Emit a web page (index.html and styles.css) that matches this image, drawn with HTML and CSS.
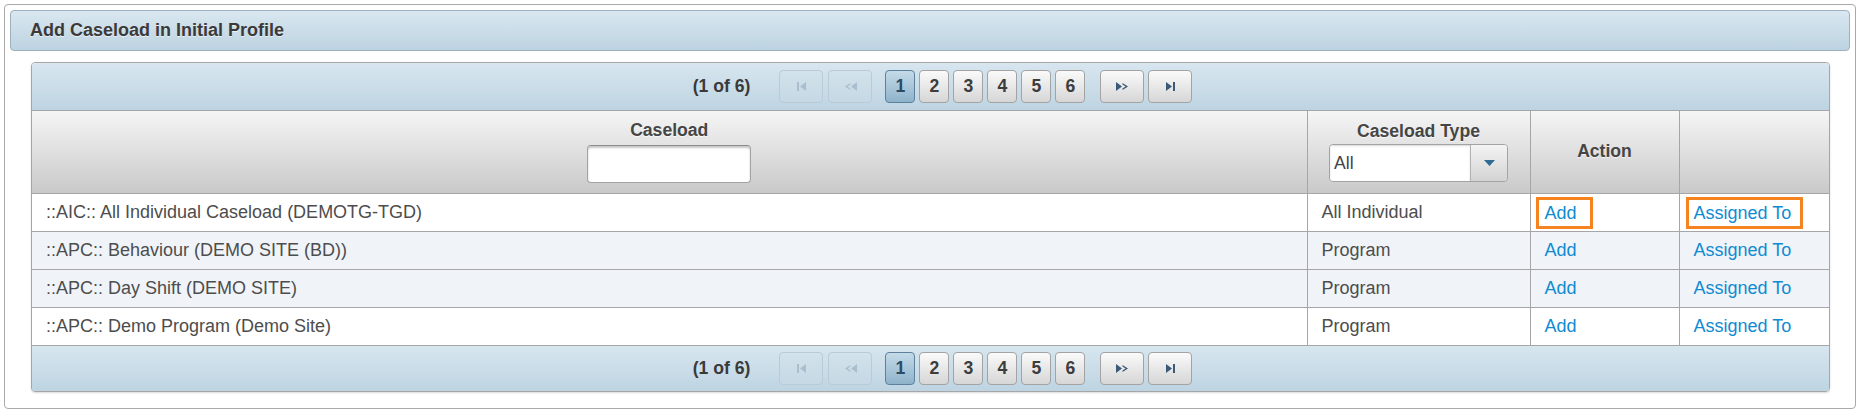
FILE: index.html
```html
<!DOCTYPE html>
<html lang="en">
<head>
    <meta charset="UTF-8">
    <meta name="viewport" content="width=device-width, initial-scale=1.0">
    <title>Add Caseload in Initial Profile</title>
    <link rel="stylesheet" href="styles.css">
</head>
<body>
    <div class="panel">
        <div class="panel-title">Add Caseload in Initial Profile</div>

        <div class="datatable">
            <div class="paginator">
                <span class="current">(1 of 6)</span>
                <span class="pg-btn nav disabled first"><svg width="15" height="9" viewBox="0 0 15 9"><rect x="3" y="0" width="2" height="9"/><path d="M12 0 L6 4.5 L12 9 Z"/></svg></span>
                <span class="pg-btn nav disabled prev"><svg width="15" height="9" viewBox="0 0 15 9"><path d="M7.5 1 L2 4.5 L7.5 8 L7.5 6.6 L4.4 4.5 L7.5 2.4 Z"/><path d="M14 0 L8 4.5 L14 9 Z"/></svg></span>
                <span class="pages">
                    <span class="pg-btn page active">1</span>
                    <span class="pg-btn page">2</span>
                    <span class="pg-btn page">3</span>
                    <span class="pg-btn page">4</span>
                    <span class="pg-btn page">5</span>
                    <span class="pg-btn page">6</span>
                </span>
                <span class="pg-btn nav next"><svg width="15" height="9" viewBox="0 0 15 9"><path d="M1 0 L7 4.5 L1 9 Z"/><path d="M7.5 1 L13 4.5 L7.5 8 L7.5 6.6 L10.6 4.5 L7.5 2.4 Z"/></svg></span>
                <span class="pg-btn nav last"><svg width="15" height="9" viewBox="0 0 15 9"><path d="M3 0 L9 4.5 L3 9 Z"/><rect x="10" y="0" width="2" height="9"/></svg></span>
            </div>

            <table class="grid">
                <colgroup>
                    <col class="c-name">
                    <col class="c-type">
                    <col class="c-action">
                    <col class="c-assign">
                </colgroup>
                <thead>
                    <tr>
                        <th>
                            <span class="th-label">Caseload</span>
                            <input type="text" class="filter-input">
                        </th>
                        <th>
                            <span class="th-label">Caseload Type</span>
                            <div class="filter-select">
                                <span class="select-value">All</span>
                                <span class="select-trigger"><svg width="11" height="6" viewBox="0 0 11 6"><path d="M0 0 H11 L5.5 6 Z"/></svg></span>
                            </div>
                        </th>
                        <th>Action</th>
                        <th></th>
                    </tr>
                </thead>
                <tbody>
                    <tr>
                        <td>::AIC:: All Individual Caseload (DEMOTG-TGD)</td>
                        <td>All Individual</td>
                        <td><a href="#" class="link marked add-mark">Add</a></td>
                        <td><a href="#" class="link marked assign-mark">Assigned To</a></td>
                    </tr>
                    <tr class="alt">
                        <td>::APC:: Behaviour (DEMO SITE (BD))</td>
                        <td>Program</td>
                        <td><a href="#" class="link">Add</a></td>
                        <td><a href="#" class="link">Assigned To</a></td>
                    </tr>
                    <tr class="alt">
                        <td>::APC:: Day Shift (DEMO SITE)</td>
                        <td>Program</td>
                        <td><a href="#" class="link">Add</a></td>
                        <td><a href="#" class="link">Assigned To</a></td>
                    </tr>
                    <tr>
                        <td>::APC:: Demo Program (Demo Site)</td>
                        <td>Program</td>
                        <td><a href="#" class="link">Add</a></td>
                        <td><a href="#" class="link">Assigned To</a></td>
                    </tr>
                </tbody>
            </table>

            <div class="paginator bottom">
                <span class="current">(1 of 6)</span>
                <span class="pg-btn nav disabled first"><svg width="15" height="9" viewBox="0 0 15 9"><rect x="3" y="0" width="2" height="9"/><path d="M12 0 L6 4.5 L12 9 Z"/></svg></span>
                <span class="pg-btn nav disabled prev"><svg width="15" height="9" viewBox="0 0 15 9"><path d="M7.5 1 L2 4.5 L7.5 8 L7.5 6.6 L4.4 4.5 L7.5 2.4 Z"/><path d="M14 0 L8 4.5 L14 9 Z"/></svg></span>
                <span class="pages">
                    <span class="pg-btn page active">1</span>
                    <span class="pg-btn page">2</span>
                    <span class="pg-btn page">3</span>
                    <span class="pg-btn page">4</span>
                    <span class="pg-btn page">5</span>
                    <span class="pg-btn page">6</span>
                </span>
                <span class="pg-btn nav next"><svg width="15" height="9" viewBox="0 0 15 9"><path d="M1 0 L7 4.5 L1 9 Z"/><path d="M7.5 1 L13 4.5 L7.5 8 L7.5 6.6 L10.6 4.5 L7.5 2.4 Z"/></svg></span>
                <span class="pg-btn nav last"><svg width="15" height="9" viewBox="0 0 15 9"><path d="M3 0 L9 4.5 L3 9 Z"/><rect x="10" y="0" width="2" height="9"/></svg></span>
            </div>
        </div>
    </div>
</body>
</html>
```

FILE: styles.css
```css
body {
    font-family: 'Liberation Sans', Arial, sans-serif;
    margin: 4px 10px 4px 4px;
    background: #fff;
    color: #4d4d4d;
}
.panel {
    border: 1px solid #a9a9a9;
    border-radius: 4px;
    padding: 5px 5px 16px 5px;
    background: #fff;
}
.panel-title {
    height: 39px;
    line-height: 39px;
    padding-left: 19px;
    border: 1px solid #9eb0bd;
    border-radius: 4px;
    background: linear-gradient(to bottom, #d9e7f0, #bdd3e1);
    font-size: 18px;
    font-weight: bold;
    color: #3a3a3a;
    text-shadow: 0 1px 0 rgba(255, 255, 255, 0.6);
}
.datatable {
    margin: 11px 20px 0 21px;
    border: 1px solid #a6a6a6;
    border-radius: 4px;
    overflow: hidden;
    box-shadow: 0 1px 2px rgba(0, 0, 0, 0.15);
}
.paginator {
    display: flex;
    align-items: center;
    justify-content: center;
    padding: 7px 0 7px 24px;
    background: linear-gradient(to bottom, #d7e6ef, #bed4e2);
    border-bottom: 1px solid #a6a6a6;
}
.paginator.bottom {
    border-bottom: none;
    padding: 6px 0 6px 24px;
}
.current {
    font-size: 17.6px;
    font-weight: bold;
    color: #3a3a3a;
    margin-right: 29px;
}
.pg-btn {
    display: inline-flex;
    align-items: center;
    justify-content: center;
    box-sizing: border-box;
    height: 33px;
    border: 1px solid #a3a3a3;
    border-radius: 4px;
    background: linear-gradient(to bottom, #fafafa, #d6d6d6);
    font-size: 17.6px;
    font-weight: bold;
    color: #3d3d3d;
}
.pg-btn.nav {
    width: 44px;
}
.pg-btn.nav svg {
    fill: #3b5a77;
}
.pg-btn.disabled {
    background: linear-gradient(to bottom, #d3e2ec, #c5d8e4);
    border-color: #b9cbd7;
}
.pg-btn.disabled svg {
    fill: #a9bfcf;
}
.prev {
    margin-left: 5px;
}
.pages {
    display: flex;
    gap: 4px;
    margin: 0 15px 0 13px;
}
.pg-btn.page {
    width: 30px;
}
.pg-btn.page.active {
    background: linear-gradient(to bottom, #c4dae8, #8fb3cb);
    border-color: #5d819b;
    color: #2c4c66;
}
.last {
    margin-left: 4px;
}
.grid {
    width: 100%;
    border-collapse: collapse;
    table-layout: fixed;
    font-size: 18px;
}
.c-type {
    width: 223px;
}
.c-action {
    width: 149px;
}
.c-assign {
    width: 150px;
}
.grid th {
    padding: 9px 10px 10px;
    background: linear-gradient(to bottom, #f5f5f5, #c9c9c9);
    border-right: 1px solid #a6a6a6;
    border-bottom: 1px solid #a6a6a6;
    font-size: 17.6px;
    font-weight: bold;
    color: #454545;
    text-shadow: 0 1px 0 rgba(255, 255, 255, 0.7);
    text-align: center;
    vertical-align: middle;
}
.grid th:last-child,
.grid td:last-child {
    border-right: none;
}
.th-label {
    display: block;
    line-height: 20px;
}
.filter-input {
    display: block;
    box-sizing: border-box;
    width: 164px;
    height: 38px;
    margin: 5px auto 0;
    border: 1px solid #a2a2a2;
    border-top-color: #8c8c8c;
    border-radius: 4px;
    background: #fff;
    box-shadow: inset 0 2px 2px rgba(0, 0, 0, 0.22);
}
.filter-select {
    display: flex;
    box-sizing: border-box;
    width: 179px;
    height: 38px;
    margin: 3px auto 0;
    border: 1px solid #a3a3a3;
    border-radius: 4px;
    overflow: hidden;
    text-align: left;
}
.select-value {
    flex: 1;
    padding-left: 4px;
    line-height: 36px;
    background: #fff;
    font-size: 17.6px;
    font-weight: normal;
    color: #444;
    text-shadow: none;
    box-shadow: inset 0 1px 2px rgba(0, 0, 0, 0.15);
}
.select-trigger {
    display: flex;
    align-items: center;
    justify-content: center;
    width: 36px;
    border-left: 1px solid #b3b3b3;
    background: linear-gradient(to bottom, #f4f4f4, #d3d3d3);
}
.select-trigger svg {
    fill: #2f6a93;
}
.grid td {
    height: 38px;
    padding: 0 14px;
    box-sizing: border-box;
    border-right: 1px solid #a6a6a6;
    border-bottom: 1px solid #a6a6a6;
    background: #fff;
    white-space: nowrap;
    overflow: hidden;
}
.grid tr.alt td {
    background: #f0f4f9;
}
.link {
    color: #0f8bd2;
    text-decoration: none;
}
.marked {
    display: inline-block;
    line-height: 26px;
    border: 3px solid #f5831f;
}
.add-mark {
    margin-left: -9px;
    padding: 0 13px 0 6px;
}
.assign-mark {
    margin-left: -8px;
    padding: 0 9px 0 5px;
}
```
